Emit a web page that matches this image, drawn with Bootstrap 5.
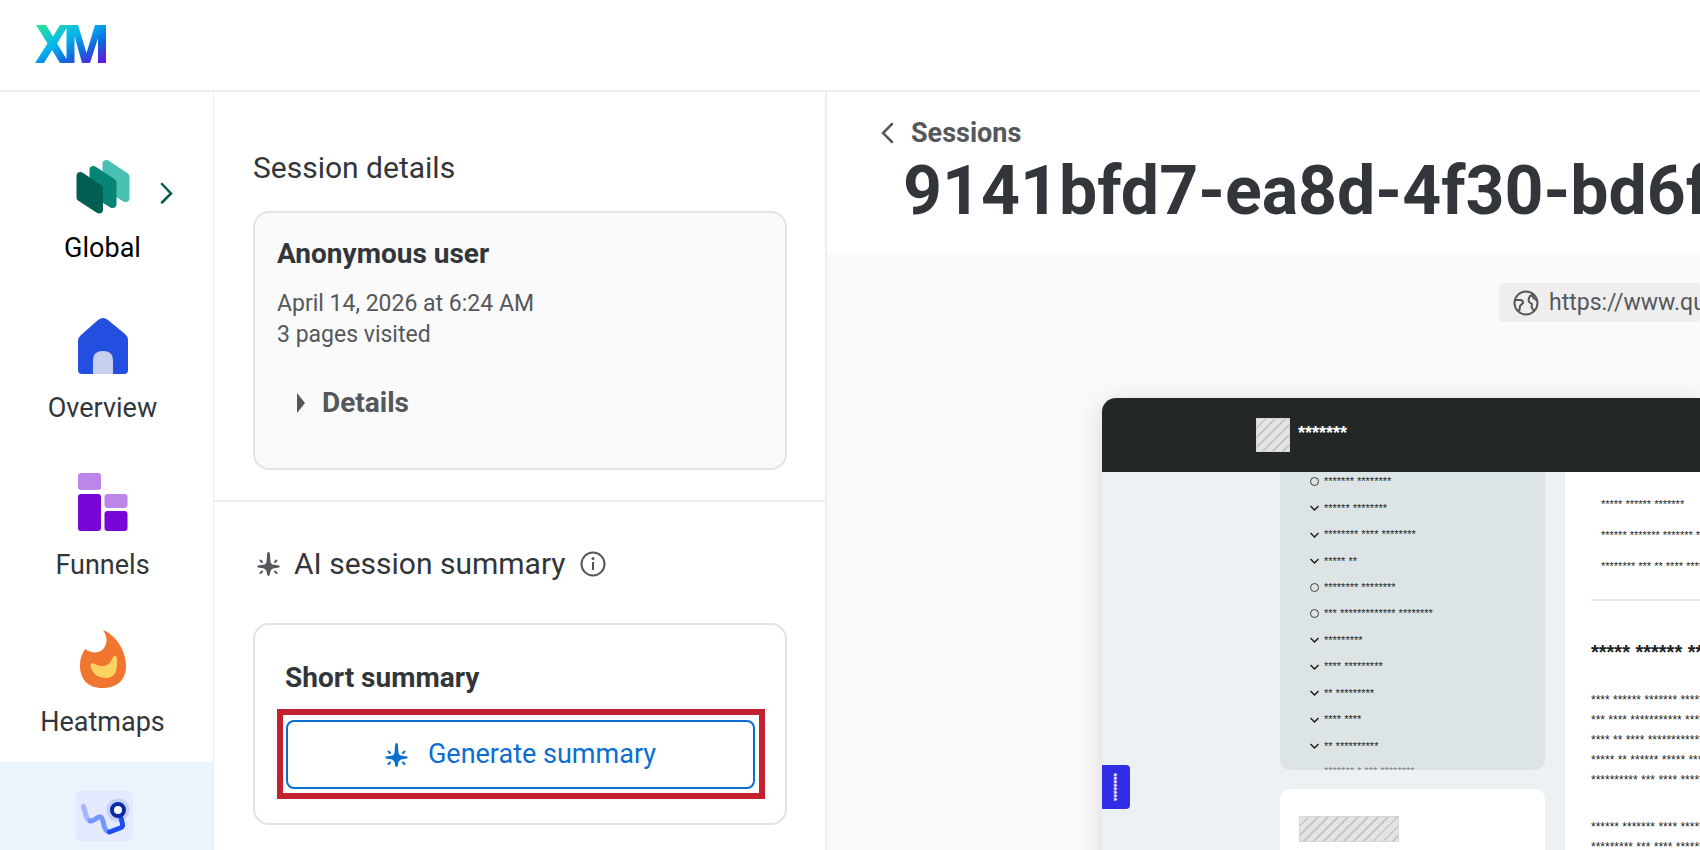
<!DOCTYPE html>
<html lang="en">
<head>
<meta charset="utf-8">
<meta name="viewport" content="width=device-width, initial-scale=1">
<title>Session replay</title>
<link rel="stylesheet" href="https://cdn.jsdelivr.net/npm/bootstrap@5.3.0/dist/css/bootstrap.min.css">
<style>
  :root { --line: #eeeeee; --ink: #32363a; --ink-soft: #54585c; --accent: #0b6ed0; }
  body { font-family: Roboto, "Liberation Sans", sans-serif; color: var(--ink); font-size: 27px; line-height: 32px; }
  .app { height: 100vh; overflow: hidden; }
  .topbar { height: 92px; border-bottom: 2px solid var(--line); padding: 0 35px 2px; }

  .rail { width: 214px; border-right: 1px solid var(--line); padding-top: 42px; }
  .rail-item { height: 157px; flex: none; padding: 24px 8px 0 0; color: var(--ink); text-align: center; text-decoration: none; background: none; border: 0; position: relative; gap: 17px; }
  .rail-item svg { width: 60px; height: 60px; flex: none; }
  .rail-item.switcher { color: #000; gap: 14px; }
  .rail-item.switcher .caret { position: absolute; left: 158px; top: 48px; width: 16px; height: 22px; }
  .rail-item.active { background: #ebf3fb; padding-right: 4px; }

  .details { width: 613px; border-right: 2px solid var(--line); }
  .details h2 { font-size: 30px; line-height: 36px; font-weight: 400; margin: 0; }
  .details h3 { font-size: 28px; line-height: 32px; font-weight: 700; margin: 0; }
  .pane { padding: 58px 38px 30px 39px; }
  .pane + .pane { border-top: 2px solid var(--line); padding-top: 44px; }
  .panel { border: 2px solid #e3e3e3; border-radius: 16px; }
  .panel.session { background: #fafafa; margin-top: 25px; padding: 25px 22px 49px; color: var(--ink-soft); font-size: 23px; line-height: 31px; }
  .panel.session h3 { color: var(--ink); margin-bottom: 18px; }
  .disclosure { border: 0; background: none; padding: 0 20px; margin-top: 37px; color: var(--ink-soft); font-weight: 700; font-size: 28px; line-height: 32px; gap: 17px; }
  .section-title { gap: 14px; padding-left: 4px; }
  .panel.summary { margin-top: 41px; padding: 37px 20px 24px 22px; }
  .panel.summary h3 { padding-left: 8px; margin-bottom: 15px; }
  .callout { border: 6px solid #c32130; padding: 5px 4px 4px 3px; }
  .btn-generate { height: 69px; border: 2px solid var(--accent); border-radius: 8px; color: var(--accent); font-size: 27px; gap: 20px; }

  .crumb { color: var(--ink-soft); font-weight: 700; text-decoration: none; gap: 17px; }
  .view-head { padding: 25px 0 0 54px; height: 161px; }
  .view-head h1 { font-size: 68px; line-height: 80px; font-weight: 700; margin: 2px 0 0 22px; white-space: nowrap; }
  .stage { background: #fafafa; padding-top: 30px; }
  .url { background: #eee; border-radius: 4px; height: 39px; margin-left: 672px; padding-left: 14px; gap: 10px; font-size: 23px; color: var(--ink-soft); white-space: nowrap; }
  .replay { margin: 76px 0 0 275px; border-top-left-radius: 14px; background: #ecf1f4; box-shadow: 0 4px 28px rgba(0,0,0,.14); font-family: "Liberation Sans", sans-serif; color: #1b1f1e; position: relative; }
  .site-head { background: #232726; height: 74px; border-top-left-radius: 14px; padding-left: 154px; gap: 8px; color: #fff; font-size: 18px; line-height: 30px; font-weight: 700; }
  .site-name { height: 34px; }
  .hatch { background: repeating-linear-gradient(135deg, #e4e4e4 0 5px, #c6c6c6 5px 7px); border: 1px solid #d6d6d6; }
  .hatch.logo { width: 34px; height: 34px; }
  .hatch.wide { width: 100px; height: 26px; }
  .site-body { padding-left: 178px; gap: 20px; }
  .toc-col { width: 265px; }
  .toc { background: #dce4e6; border-radius: 0 0 10px 10px; height: 298px; overflow: hidden; padding: 0 0 0 30px; font-size: 11px; line-height: 12px; }
  .toc ul { height: 291px; margin-top: -4px; }
  .toc li { flex: 1; gap: 5px; }
  .toc svg { width: 9px; height: 9px; flex: none; }
  .toc .clipped { color: #7d8586; padding: 6px 0 0 14px; }
  .side-box { background: #fff; border-radius: 10px; margin-top: 19px; padding: 27px 19px; height: 120px; }
  .article { background: #fff; padding: 17px 0 0 26px; white-space: nowrap; overflow: hidden; font-size: 12px; line-height: 20px; }
  .article ol { margin: 0 0 0 10px; font-size: 11px; line-height: 31px; }
  .article hr { margin: 17px 0 39px; border-top: 2px solid #dfe7ec; opacity: 1; }
  .article h4 { font-size: 20px; line-height: 24px; font-weight: 700; margin: 0 0 26px; }
  .article p { margin: 0 0 27px; }
  .feedback { position: absolute; left: 0; top: 367px; width: 28px; height: 44px; border: 0; padding: 0 0 0 2px; background: #302de5; color: #fff; border-radius: 0 4px 4px 0; font-size: 9px; font-weight: 700; writing-mode: vertical-rl; }
</style>
</head>
<body>
<div class="app d-flex flex-column">
  <header class="topbar d-flex align-items-center flex-shrink-0">
    <svg width="72" height="38" viewBox="0 0 72 38" role="img" aria-label="XM">
      <defs><linearGradient id="xm" x1="0" y1="0" x2="1" y2="1"><stop offset="0" stop-color="#2be890"/><stop offset=".4" stop-color="#04b6ee"/><stop offset=".68" stop-color="#1168de"/><stop offset="1" stop-color="#6a0fe0"/></linearGradient></defs>
      <path fill="url(#xm)" fill-rule="evenodd" d="M1 0H11L18 11.500L25 0H43L51.500 28L60 0H71V38H63V13L55 38H47L39.500 11V38H25L17 25L9 38H0L12.500 18.500ZM31.500 3L22 18.500L31.500 34Z"/>
    </svg>
  </header>

  <div class="d-flex flex-grow-1 overflow-hidden">
    <nav class="rail d-flex flex-column flex-shrink-0" aria-label="Main">
      <button type="button" class="rail-item switcher d-flex flex-column align-items-center">
        <svg viewBox="0 0 60 60"><g stroke-linejoin="round" stroke-width="8">
          <path fill="#48c1b3" stroke="#48c1b3" d="M33.500 6L52.500 18.500V40L33.500 28Z"/>
          <path fill="#068475" stroke="#068475" d="M20.500 12L39.500 24.500V46L20.500 34Z"/>
          <path fill="#015f52" stroke="#015f52" d="M7.500 18L26 30.500V51.500L7.500 39.500Z"/></g></svg>
        <svg class="caret" viewBox="0 0 16 22" fill="none" stroke="#015f52" stroke-width="2.500" stroke-linecap="round"><path d="M4 2L13 11.500L4 20.500"/></svg>
        <span>Global</span>
      </button>
      <a href="#" class="rail-item d-flex flex-column align-items-center">
        <svg viewBox="0 0 60 60"><path fill="#224fdf" d="M8 20Q5 22.500 5 26V55Q5 59 9 59H51Q55 59 55 55V25Q55 21.500 52 19L35 5Q30 1 25 5Z"/><path fill="#c7cfef" d="M20 59V45Q20 36 30 36T40 45V59Z"/></svg>
        <span>Overview</span>
      </a>
      <a href="#" class="rail-item d-flex flex-column align-items-center">
        <svg viewBox="0 0 60 60"><g fill="#bd84ea"><rect x="5" y="1" width="23" height="17" rx="3"/><rect x="31.500" y="22" width="23" height="14" rx="3"/></g><g fill="#7a05d8"><rect x="5" y="22" width="23" height="37" rx="3"/><rect x="31.500" y="39" width="23" height="20" rx="3"/></g></svg>
        <span>Funnels</span>
      </a>
      <a href="#" class="rail-item d-flex flex-column align-items-center">
        <svg viewBox="0 0 60 60"><path fill="#f07630" d="M30 1C43 6 53 22 53 37C53 52 43 59 29 59C15 59 7 50 7 37C7 30 9 24 12.500 20C18 25 27 24.500 31 19C35 13 34 7 30 1Z"/><path fill="#ffd362" d="M17.500 37C17 34 20 33.500 22 35C31 40 37 36 39.500 29C41 26 44 26.500 44 30C45 43 41 49 33 49C24 49 19 44 17.500 37Z"/></svg>
        <span>Heatmaps</span>
      </a>
      <a href="#" class="rail-item active d-flex flex-column align-items-center" aria-label="Session replay">
        <svg viewBox="0 0 60 60"><rect x="1" y="5" width="57" height="50" rx="6" fill="#e3e9fe"/><circle cx="43" cy="24" r="11.500" fill="#c3d0f8"/><g fill="none" stroke-width="5" stroke-linecap="round" stroke-linejoin="round"><path stroke="#a3b8fc" d="M8.500 20.500L11 29Q12 34 15.500 35"/><path stroke="#7796fb" d="M15.500 35C20 35 22 30 25.500 31C29 32 28 43 32 45"/><path stroke="#1c4dfb" d="M46 32L47.500 38Q48 41 45 42L34.500 46"/></g><circle cx="43" cy="24" r="6" fill="#fff" stroke="#0b2c9e" stroke-width="4"/></svg>
      </a>
    </nav>

    <aside class="details flex-shrink-0">
      <section class="pane">
        <h2>Session details</h2>
        <div class="panel session">
          <h3>Anonymous user</h3>
          <div>April 14, 2026 at 6:24 AM</div>
          <div>3 pages visited</div>
          <button type="button" class="disclosure d-flex align-items-center"><svg width="8" height="20" viewBox="0 0 8 20"><path fill="#54585c" d="M0 0L8 10L0 20Z"/></svg>Details</button>
        </div>
      </section>
      <section class="pane">
        <div class="section-title d-flex align-items-center">
          <svg width="23" height="24" viewBox="0 0 23 24"><use href="#spark" fill="#54585c" stroke="#54585c"/></svg>
          <h2>AI session summary</h2>
          <svg width="26" height="26" viewBox="0 0 26 26"><circle cx="13" cy="13" r="11.500" fill="none" stroke="#54585c" stroke-width="2"/><path stroke="#54585c" stroke-width="2" d="M13 11V19"/><circle cx="13" cy="7.500" r="1.500" fill="#54585c"/></svg>
        </div>
        <div class="panel summary">
          <h3>Short summary</h3>
          <div class="callout">
            <button type="button" class="btn btn-generate w-100 d-flex align-items-center justify-content-center">
              <svg width="23" height="24" viewBox="0 0 23 24" fill="#0b6ed0" stroke="#0b6ed0"><g id="spark"><path stroke="none" d="M11.500 0Q12.800 0 12.900 2L13.500 10Q14 11.500 15.500 12.500L22 13.600Q23.500 14.600 22 15.600L16 16.500Q14.500 17 13.500 19L12.700 23Q11.500 25 10.300 23L9.500 19Q8.500 17 7 16.500L1 15.600Q-.5 14.600 1 13.600L7.500 12.500Q9 11.500 9.500 10L10.100 2Q10.200 0 11.500 0Z"/><path fill="none" stroke-width="2" stroke-linecap="round" d="M3.500 8.500L5 10M19.500 8.500L18 10M3.500 21L5 19.500M19.500 21L18 19.500"/></g></svg>
              Generate summary
            </button>
          </div>
        </div>
      </section>
    </aside>

    <main class="flex-grow-1 d-flex flex-column overflow-hidden">
      <div class="view-head flex-shrink-0">
        <a href="#" class="crumb d-flex align-items-center"><svg width="13" height="22" viewBox="0 0 13 22" fill="none" stroke="#54585c" stroke-width="2.500" stroke-linecap="round"><path d="M11 2L2 11L11 20"/></svg>Sessions</a>
        <h1>9141bfd7-ea8d-4f30-bd6f</h1>
      </div>
      <div class="stage flex-grow-1 overflow-hidden">
        <div class="url d-flex align-items-center">
          <svg class="flex-shrink-0" width="26" height="26" viewBox="0 0 26 26" fill="none" stroke="#54585c" stroke-width="2" stroke-linejoin="round"><circle cx="13" cy="13" r="11.500"/><path d="M2 10H8Q10.500 11 10 13L7 16L6.500 20L4.500 21M20.500 4.500L17 6Q15 9 16 12L19 14L18.500 17L21 21M19 5.500Q20.500 9 24 10.500"/></svg>
          <span>https://www.qualtrics.com</span>
        </div>
        <div class="replay">
          <div class="site-head d-flex align-items-center"><span class="hatch logo"></span><span class="site-name">*******</span></div>
          <div class="site-body d-flex">
            <div class="toc-col flex-shrink-0">
              <div class="toc">
                <ul class="list-unstyled d-flex flex-column mb-0" id="toc"></ul>
                <div class="clipped">******* * *** ********</div>
              </div>
              <div class="side-box"><div class="hatch wide"></div></div>
            </div>
            <div class="article flex-grow-1">
              <ol class="list-unstyled"><li>***** ****** *******</li><li>****** ******* ******* *****</li><li>******** *** ** **** ******</li></ol>
              <hr>
              <h4>***** ****** *****</h4>
              <p>**** ****** ******* ******<br>*** **** *********** *****<br>**** ** **** ***************<br>***** ** ****** ***** ****<br>********** *** **** *******</p>
              <p>****** ******* **** ******<br>********* *** **** *******</p>
            </div>
          </div>
          <button type="button" class="feedback">********</button>
        </div>
      </div>
    </main>
  </div>
</div>
<script>
  // Masked outline of the recorded page: o = leaf entry, v = expandable entry
  const shapes = {
    o: '<svg viewBox="0 0 9 9"><circle cx="4.500" cy="4.500" r="4" fill="none" stroke="#3a3f3f"/></svg>',
    v: '<svg viewBox="0 0 9 9"><path d="M.5 3L4.500 7L8.500 3" fill="none" stroke="#1b1f1e" stroke-width="1.500"/></svg>'
  };
  document.getElementById('toc').innerHTML = [
    ['o', '******* ********'], ['v', '****** ********'], ['v', '******** **** ********'], ['v', '***** **'],
    ['o', '******** ********'], ['o', '*** ************* ********'], ['v', '*********'], ['v', '**** *********'],
    ['v', '** *********'], ['v', '**** ****'], ['v', '** **********']
  ].map(([k, t]) => `<li class="d-flex align-items-center">${shapes[k]}<span>${t}</span></li>`).join('');
</script>
<script src="https://cdn.jsdelivr.net/npm/bootstrap@5.3.0/dist/js/bootstrap.bundle.min.js"></script>
</body>
</html>
